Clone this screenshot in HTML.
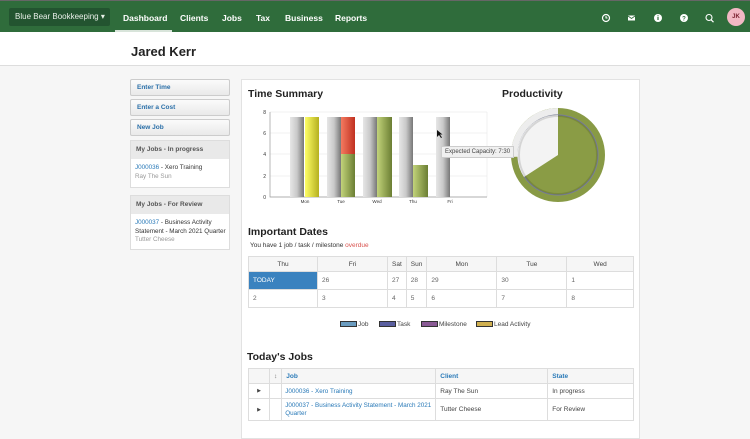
<!DOCTYPE html>
<html><head><meta charset="utf-8"><style>
*{box-sizing:border-box;margin:0;padding:0}
body{width:750px;height:427px;overflow:hidden;background:#f6f6f6;font-family:"Liberation Sans",Arial,sans-serif;position:relative;color:#333}
.a{position:absolute}
.nav{left:0;top:0;width:750px;height:32px;background:#2f6c3b;border-top:1px solid #666}
.nav .t{color:#fff;font-weight:bold;font-size:8.5px;top:12px}
.brand{left:9px;top:7px;width:101px;height:18px;background:#235430;border-radius:2px;color:#e8efe8;font-size:8px;padding:4px 0 0 6px}
.band{left:0;top:32px;width:750px;height:34px;background:#fff;border-bottom:1px solid #ddd}
.btn{left:130px;width:100px;height:17px;background:linear-gradient(#fbfbfb,#e9e9e9);border:1px solid #ccc;border-radius:2px;color:#2a6fa8;font-weight:bold;font-size:6.5px;padding:4px 0 0 6px}
.box{left:130px;width:100px;background:#fff;border:1px solid #ddd}
.box .h{background:#e9e9e9;height:18px;font-size:6.5px;font-weight:bold;padding:5px 0 0 5px;color:#555}
.box .b{font-size:6.3px;padding:5px 3px 5px 4px;line-height:8.5px}
.lnk{color:#2a7ab8}
.panel{left:241px;top:79px;width:399px;height:360px;background:#fff;border:1px solid #e2e2e2}
h2{position:absolute;font-size:10.5px;font-weight:bold;color:#222}
table{border-collapse:collapse;position:absolute;font-size:6.5px}
td,th{border:1px solid #ddd;padding:0 4px}
.cal th{height:15px;font-weight:normal;background:#f6f6f6;color:#444;text-align:center}
.cal td{height:18px;color:#666}
.jobs th{height:15px;background:#f6f6f6;color:#2a7ab8;text-align:left;font-weight:bold}
.jobs td{color:#444}
.jobs td.lnk{color:#2a7ab8;padding:0 3px;font-size:6.3px}
.lg{top:321px;font-size:6.5px;color:#444}
.lg span{display:inline-block;width:17px;height:6px;border:1px solid #333;vertical-align:middle;margin-right:1px}
</style></head><body>
<div class="a nav">
 <div class="a brand">Blue Bear Bookkeeping ▾</div>
 <div class="a t" style="left:123px">Dashboard</div>
 <div class="a" style="left:115px;top:29px;width:57px;height:3px;background:#d8e4da"></div>
 <div class="a t" style="left:180px">Clients</div>
 <div class="a t" style="left:222px">Jobs</div>
 <div class="a t" style="left:256px">Tax</div>
 <div class="a t" style="left:285px">Business</div>
 <div class="a t" style="left:335px">Reports</div>
 <svg class="a" style="left:600px;top:11px" width="116" height="12" viewBox="0 0 116 12">
  <circle cx="6" cy="6" r="3.5" fill="none" stroke="#fff" stroke-width="1.2"/><path d="M6 4v2h1.5" stroke="#fff" fill="none"/>
  <rect x="28" y="3.5" width="7" height="5" fill="#fff"/><path d="M28 4l3.5 2.5L35 4" stroke="#2f6c3b" fill="none" stroke-width=".8"/>
  <circle cx="58" cy="6" r="4" fill="#fff"/><rect x="57.4" y="5" width="1.2" height="3" fill="#2f6c3b"/><rect x="57.4" y="3.3" width="1.2" height="1" fill="#2f6c3b"/>
  <circle cx="84" cy="6" r="4" fill="#fff"/><text x="84" y="8.5" font-size="6" font-weight="bold" text-anchor="middle" fill="#2f6c3b" font-family="Liberation Sans">?</text>
  <circle cx="109" cy="5.5" r="3" fill="none" stroke="#fff" stroke-width="1.1"/><path d="M111 7.7l2.5 2.5" stroke="#fff" stroke-width="1.2"/>
 </svg>
 <div class="a" style="left:727px;top:7px;width:18px;height:18px;border-radius:50%;background:#f2b8c4;color:#7a2030;font-size:6px;font-weight:bold;text-align:center;line-height:18px">JK</div>
</div>
<div class="a band"><div class="a" style="left:131px;top:12px;font-size:13px;font-weight:bold;color:#222">Jared Kerr</div></div>

<div class="a btn" style="top:79px">Enter Time</div>
<div class="a btn" style="top:99px">Enter a Cost</div>
<div class="a btn" style="top:119px">New Job</div>
<div class="a box" style="top:140px;height:48px"><div class="h">My Jobs - In progress</div><div class="b"><span class="lnk">J000036</span> - Xero Training<br><span style="color:#999">Ray The Sun</span></div></div>
<div class="a box" style="top:195px;height:55px"><div class="h">My Jobs - For Review</div><div class="b"><span class="lnk">J000037</span> - Business Activity<br>Statement - March 2021 Quarter<br><span style="color:#999">Tutter Cheese</span></div></div>

<div class="a panel"></div>
<h2 style="left:248px;top:88px">Time Summary</h2>
<h2 style="left:502px;top:88px">Productivity</h2>
<svg class="a" style="left:255px;top:105px" width="240" height="102" viewBox="255 105 240 102">
 <defs>
  <linearGradient id="g" x1="0" x2="1"><stop offset="0" stop-color="#e6e6e6"/><stop offset=".5" stop-color="#c9c9c9"/><stop offset="1" stop-color="#777"/></linearGradient>
  <linearGradient id="y" x1="0" x2="1"><stop offset="0" stop-color="#ffff66"/><stop offset="1" stop-color="#b5b020"/></linearGradient>
  <linearGradient id="gr" x1="0" x2="1"><stop offset="0" stop-color="#c2d37a"/><stop offset="1" stop-color="#6b7e33"/></linearGradient>
  <linearGradient id="r" x1="0" x2="1"><stop offset="0" stop-color="#f47a60"/><stop offset="1" stop-color="#c03020"/></linearGradient>
 </defs>
 <g stroke="#e6e6e6" stroke-width=".6"><path d="M270 112H487M270 133H487M270 154H487M270 176H487M270 197H487M487 112V197"/></g>
 <path d="M270 112V197H487" stroke="#999" fill="none" stroke-width=".7"/>
 <g font-size="5" fill="#333" font-family="Liberation Sans" text-anchor="end"><text x="266" y="114">8</text><text x="266" y="135">6</text><text x="266" y="156">4</text><text x="266" y="178">2</text><text x="266" y="199">0</text></g>
 <rect x="290" y="117" width="14" height="80" fill="url(#g)"/><rect x="305" y="117" width="14" height="80" fill="url(#y)"/>
 <rect x="327" y="117" width="14" height="80" fill="url(#g)"/><rect x="341" y="117" width="14" height="37" fill="url(#r)"/><rect x="341" y="154" width="14" height="43" fill="url(#gr)"/>
 <rect x="363" y="117" width="14" height="80" fill="url(#g)"/><rect x="377" y="117" width="15" height="80" fill="url(#gr)"/>
 <rect x="399" y="117" width="14" height="80" fill="url(#g)"/><rect x="413" y="165" width="15" height="32" fill="url(#gr)"/>
 <rect x="436" y="117" width="14" height="80" fill="url(#g)"/>
 <g font-size="4.5" fill="#333" font-family="Liberation Sans" text-anchor="middle"><text x="305" y="203">Mon</text><text x="341" y="203">Tue</text><text x="377" y="203">Wed</text><text x="413" y="203">Thu</text><text x="450" y="203">Fri</text></g>
</svg>
<svg class="a" style="left:508px;top:105px" width="100" height="100" viewBox="0 0 100 100">
 <circle cx="50" cy="50" r="47" fill="#889a45"/>
 <path d="M50 50L50 3A47 47 0 0 0 3 52Z" fill="#ededed"/>
 <circle cx="50" cy="50" r="40" fill="#8a9c45" stroke="#7d8398" stroke-width="1.2"/>
 <path d="M50 50L50 10A40 40 0 0 0 16 72Z" fill="#f3f3f3"/>
 <circle cx="50" cy="50" r="39" fill="none" stroke="rgba(0,0,0,.12)" stroke-width="2"/>
</svg>
<div class="a" style="left:441px;top:146px;background:#f0f0f0;border:1px solid #ccc;font-size:6px;color:#444;padding:2px 3px">Expected Capacity: 7:30</div>
<svg class="a" style="left:437px;top:130px" width="6" height="9"><path d="M0 0V7L2 5L4 8L5 7.5L3 4.5H5.5Z" fill="#111"/></svg>

<h2 style="left:248px;top:226px">Important Dates</h2>
<div class="a" style="left:250px;top:242px;font-size:6.5px;color:#333">You have 1 job / task / milestone <span style="color:#d9534f">overdue</span></div>
<table class="cal" style="left:248px;top:256px;width:386px">
<tr><th style="width:69px">Thu</th><th style="width:70px">Fri</th><th style="width:18px">Sat</th><th style="width:19px">Sun</th><th style="width:70px">Mon</th><th style="width:70px">Tue</th><th>Wed</th></tr>
<tr><td style="background:#3a82bf;color:#fff">TODAY</td><td>26</td><td>27</td><td>28</td><td>29</td><td>30</td><td>1</td></tr>
<tr><td>2</td><td>3</td><td>4</td><td>5</td><td>6</td><td>7</td><td>8</td></tr>
</table>
<div class="a lg" style="left:340px"><span style="background:#6a9cc0"></span>Job</div>
<div class="a lg" style="left:379px"><span style="background:#5a5fa0"></span>Task</div>
<div class="a lg" style="left:421px"><span style="background:#8a5a95"></span>Milestone</div>
<div class="a lg" style="left:476px"><span style="background:#d0b050"></span>Lead Activity</div>

<h2 style="left:247px;top:351px">Today's Jobs</h2>
<table class="jobs" style="left:248px;top:368px;width:386px">
<tr><th style="width:21px"></th><th style="width:12px;color:#777">↕</th><th style="width:154px">Job</th><th style="width:112px">Client</th><th>State</th></tr>
<tr style="height:15px"><td style="text-align:center;font-size:5px">▶</td><td></td><td class="lnk">J000036 - Xero Training</td><td>Ray The Sun</td><td>In progress</td></tr>
<tr style="height:22px"><td style="text-align:center;font-size:5px">▶</td><td></td><td class="lnk" style="line-height:8px">J000037 - Business Activity Statement - March 2021 Quarter</td><td>Tutter Cheese</td><td>For Review</td></tr>
</table>
</body></html>
